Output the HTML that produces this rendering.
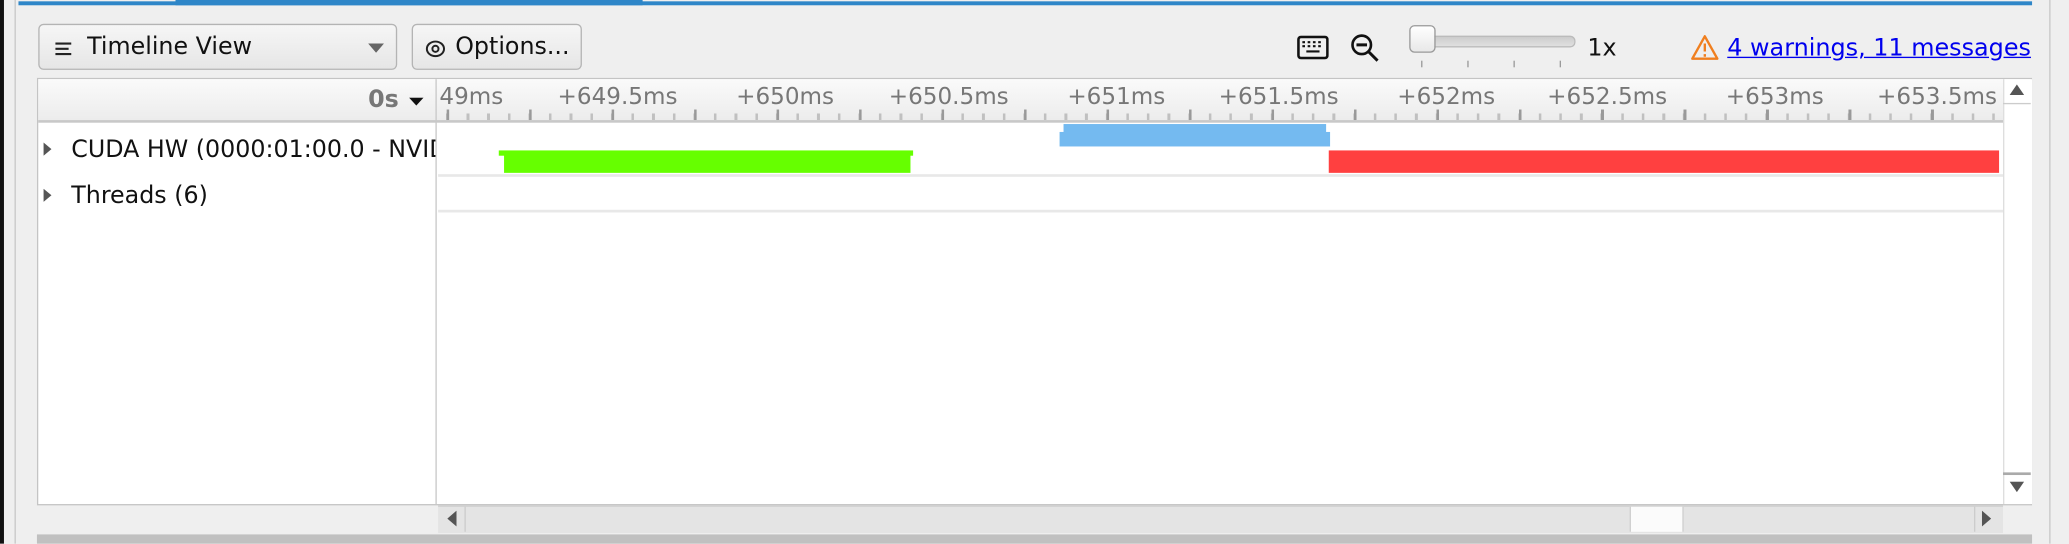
<!DOCTYPE html>
<html><head><meta charset="utf-8"><style>
html,body{margin:0;padding:0;width:2069px;height:544px;overflow:hidden;background:#efefef}
#r{position:absolute;left:0;top:0;width:1568px;height:412px;transform:scale(1.31952);transform-origin:0 0;font-family:"DejaVu Sans","Liberation Sans",sans-serif;font-size:18px;color:#111}
.a{position:absolute}
.btn{position:absolute;border:1px solid #b4b4b4;border-radius:4px;background:linear-gradient(#f6f6f6,#e6e6e6);box-sizing:border-box}
.lbl{position:absolute;top:64px;color:#777;font-size:17.5px;white-space:nowrap;transform:translateX(-50%)}
</style></head><body><div id="r">
<div class="a" style="left:0;top:0;width:3px;height:412px;background:#111"></div>
<div class="a" style="left:11px;top:0;width:1px;height:412px;background:#c8c8c8"></div>
<div class="a" style="left:1553px;top:0;width:1px;height:412px;background:#c8c8c8"></div>
<div class="a" style="left:14px;top:1px;width:1526px;height:3px;background:#2e86c8"></div>
<div class="a" style="left:133px;top:0;width:354px;height:4px;background:#2e86c8"></div>

<div class="btn" style="left:29px;top:18px;width:272px;height:35px">
 <svg class="a" style="left:11px;top:12px" width="14" height="12"><path d="M1 2h12M1 6h10M1 10h12" stroke="#222" stroke-width="1.6"/></svg>
 <span class="a" style="left:36px;top:6px">Timeline View</span>
 <svg class="a" style="left:249px;top:14px" width="12" height="7"><path d="M0 0h12L6 7z" fill="#666"/></svg>
</div>
<div class="btn" style="left:312px;top:18px;width:129px;height:35px">
 <svg class="a" style="left:9px;top:11px" width="16" height="14"><ellipse cx="8" cy="7" rx="6.5" ry="5.5" fill="none" stroke="#222" stroke-width="1.5"/><circle cx="8" cy="7" r="2.3" fill="none" stroke="#222" stroke-width="1.5"/></svg>
 <span class="a" style="left:32px;top:6px">Options...</span>
</div>

<svg class="a" style="left:983px;top:27px" width="24" height="18"><rect x="1" y="1" width="22" height="16" rx="2" fill="none" stroke="#111" stroke-width="2"/><path d="M4 5h2M8 5h2M12 5h2M16 5h2M4 8h2M8 8h2M12 8h2M16 8h2M7 12h10" stroke="#111" stroke-width="1.6"/></svg>
<svg class="a" style="left:1023px;top:25px" width="24" height="24"><circle cx="9" cy="9" r="7" fill="none" stroke="#111" stroke-width="2"/><path d="M5 9h8M14 14l7 7" stroke="#111" stroke-width="2.2"/></svg>
<div class="a" style="left:1070px;top:27px;width:122px;height:7px;border-radius:4px;background:linear-gradient(#ccc,#e0e0e0);border:1px solid #bbb"></div>
<div class="a" style="left:1068px;top:19px;width:18px;height:19px;border-radius:4px;background:linear-gradient(#fff,#e8e8e8);border:1px solid #999"></div>
<div class="a" style="left:1077px;top:46px;width:1px;height:5px;background:#999"></div>
<div class="a" style="left:1112px;top:46px;width:1px;height:5px;background:#999"></div>
<div class="a" style="left:1147px;top:46px;width:1px;height:5px;background:#999"></div>
<div class="a" style="left:1182px;top:46px;width:1px;height:5px;background:#999"></div>
<span class="a" style="left:1203px;top:26px">1x</span>
<svg class="a" style="left:1281px;top:26px" width="22" height="20"><path d="M11 1.5L20.5 18.5H1.5Z" fill="none" stroke="#f07f1f" stroke-width="1.8" stroke-linejoin="round"/><path d="M11 7v6M11 15v2" stroke="#f07f1f" stroke-width="1.8"/></svg>
<span class="a" style="left:1309px;top:26px;color:#0000ee;text-decoration:underline;font-size:18.1px">4 warnings, 11 messages</span>

<div class="a" style="left:28px;top:59px;width:1512px;height:324px;background:#fff;border:1px solid #c4c4c4;box-sizing:border-box"></div>
<div class="a" style="left:29px;top:60px;width:1489px;height:31px;background:linear-gradient(#fafafa,#ececec)"></div>
<div class="a" style="left:29px;top:91px;width:1489px;height:2px;background:#c8c8c8"></div>
<div class="a" style="left:330px;top:60px;width:1px;height:322px;background:#c8c8c8"></div>
<span class="a" style="left:279px;top:65px;color:#777;font-weight:bold">0s</span>
<svg class="a" style="left:310px;top:74px" width="11" height="6"><path d="M0 0h11L5.5 6z" fill="#111"/></svg>

<div class="a" style="left:331px;top:60px;width:1187px;height:31px;overflow:hidden">
 <div class="a" style="left:0;top:26px;width:1187px;height:5px;background:repeating-linear-gradient(90deg,#bbb 0 2px,transparent 2px 15.625px);background-position:7px 0;opacity:.9"></div>
 <div class="a" style="left:0;top:23px;width:1187px;height:8px;background:repeating-linear-gradient(90deg,#999 0 2px,transparent 2px 62.5px);background-position:7.5px 0"></div>
 <span class="lbl" style="top:4px;transform:none;left:2px">49ms</span>
 <span class="lbl" style="left:137px;top:4px">+649.5ms</span>
 <span class="lbl" style="left:264px;top:4px">+650ms</span>
 <span class="lbl" style="left:388px;top:4px">+650.5ms</span>
 <span class="lbl" style="left:515px;top:4px">+651ms</span>
 <span class="lbl" style="left:638px;top:4px">+651.5ms</span>
 <span class="lbl" style="left:765px;top:4px">+652ms</span>
 <span class="lbl" style="left:887px;top:4px">+652.5ms</span>
 <span class="lbl" style="left:1014px;top:4px">+653ms</span>
 <span class="lbl" style="left:1137px;top:4px">+653.5ms</span>
</div>

<svg class="a" style="left:33px;top:108px" width="7" height="10"><path d="M0 0l6 5-6 5z" fill="#555"/></svg>
<span class="a" style="left:54px;top:103px;width:276px;overflow:hidden;white-space:nowrap">CUDA HW (0000:01:00.0 - NVIDIA</span>
<svg class="a" style="left:33px;top:143px" width="7" height="10"><path d="M0 0l6 5-6 5z" fill="#555"/></svg>
<span class="a" style="left:54px;top:138px">Threads (6)</span>

<div class="a" style="left:332px;top:132px;width:1186px;height:2px;background:#e8e8e8"></div>
<div class="a" style="left:332px;top:159px;width:1186px;height:2px;background:#e8e8e8"></div>
<div class="a" style="left:378px;top:114px;width:314px;height:4px;background:#66ff00"></div>
<div class="a" style="left:382px;top:117px;width:308px;height:14px;background:#66ff00"></div>
<div class="a" style="left:806px;top:94px;width:199px;height:8px;background:#74baf0"></div>
<div class="a" style="left:803px;top:100px;width:205px;height:11px;background:#74baf0"></div>
<div class="a" style="left:1007px;top:114px;width:508px;height:17px;background:#ff4040"></div>

<div class="a" style="left:1518px;top:60px;width:21px;height:322px;background:#fff;border-left:1px solid #ddd"></div>
<svg class="a" style="left:1523px;top:64px" width="11" height="8"><path d="M0 8h11L5.5 0z" fill="#555"/></svg>
<div class="a" style="left:1518px;top:78px;width:21px;height:1px;background:#ccc"></div>
<div class="a" style="left:1518px;top:358px;width:21px;height:2px;background:#aaa"></div>
<svg class="a" style="left:1523px;top:365px" width="11" height="8"><path d="M0 0h11L5.5 8z" fill="#555"/></svg>

<div class="a" style="left:332px;top:383px;width:1186px;height:20px;background:#e4e4e4;border-top:1px solid #ccc"></div>
<svg class="a" style="left:339px;top:387px" width="7" height="12"><path d="M7 0v12L0 6z" fill="#555"/></svg>
<div class="a" style="left:352px;top:384px;width:1px;height:19px;background:#ccc"></div>
<div class="a" style="left:1235px;top:384px;width:39px;height:19px;background:#fbfbfb;border-left:1px solid #ccc;border-right:1px solid #ccc"></div>
<div class="a" style="left:1496px;top:384px;width:1px;height:19px;background:#ccc"></div>
<svg class="a" style="left:1502px;top:387px" width="7" height="12"><path d="M0 0v12L7 6z" fill="#555"/></svg>
<div class="a" style="left:28px;top:405px;width:1512px;height:7px;background:#c0c0c0"></div>
</div></body></html>
